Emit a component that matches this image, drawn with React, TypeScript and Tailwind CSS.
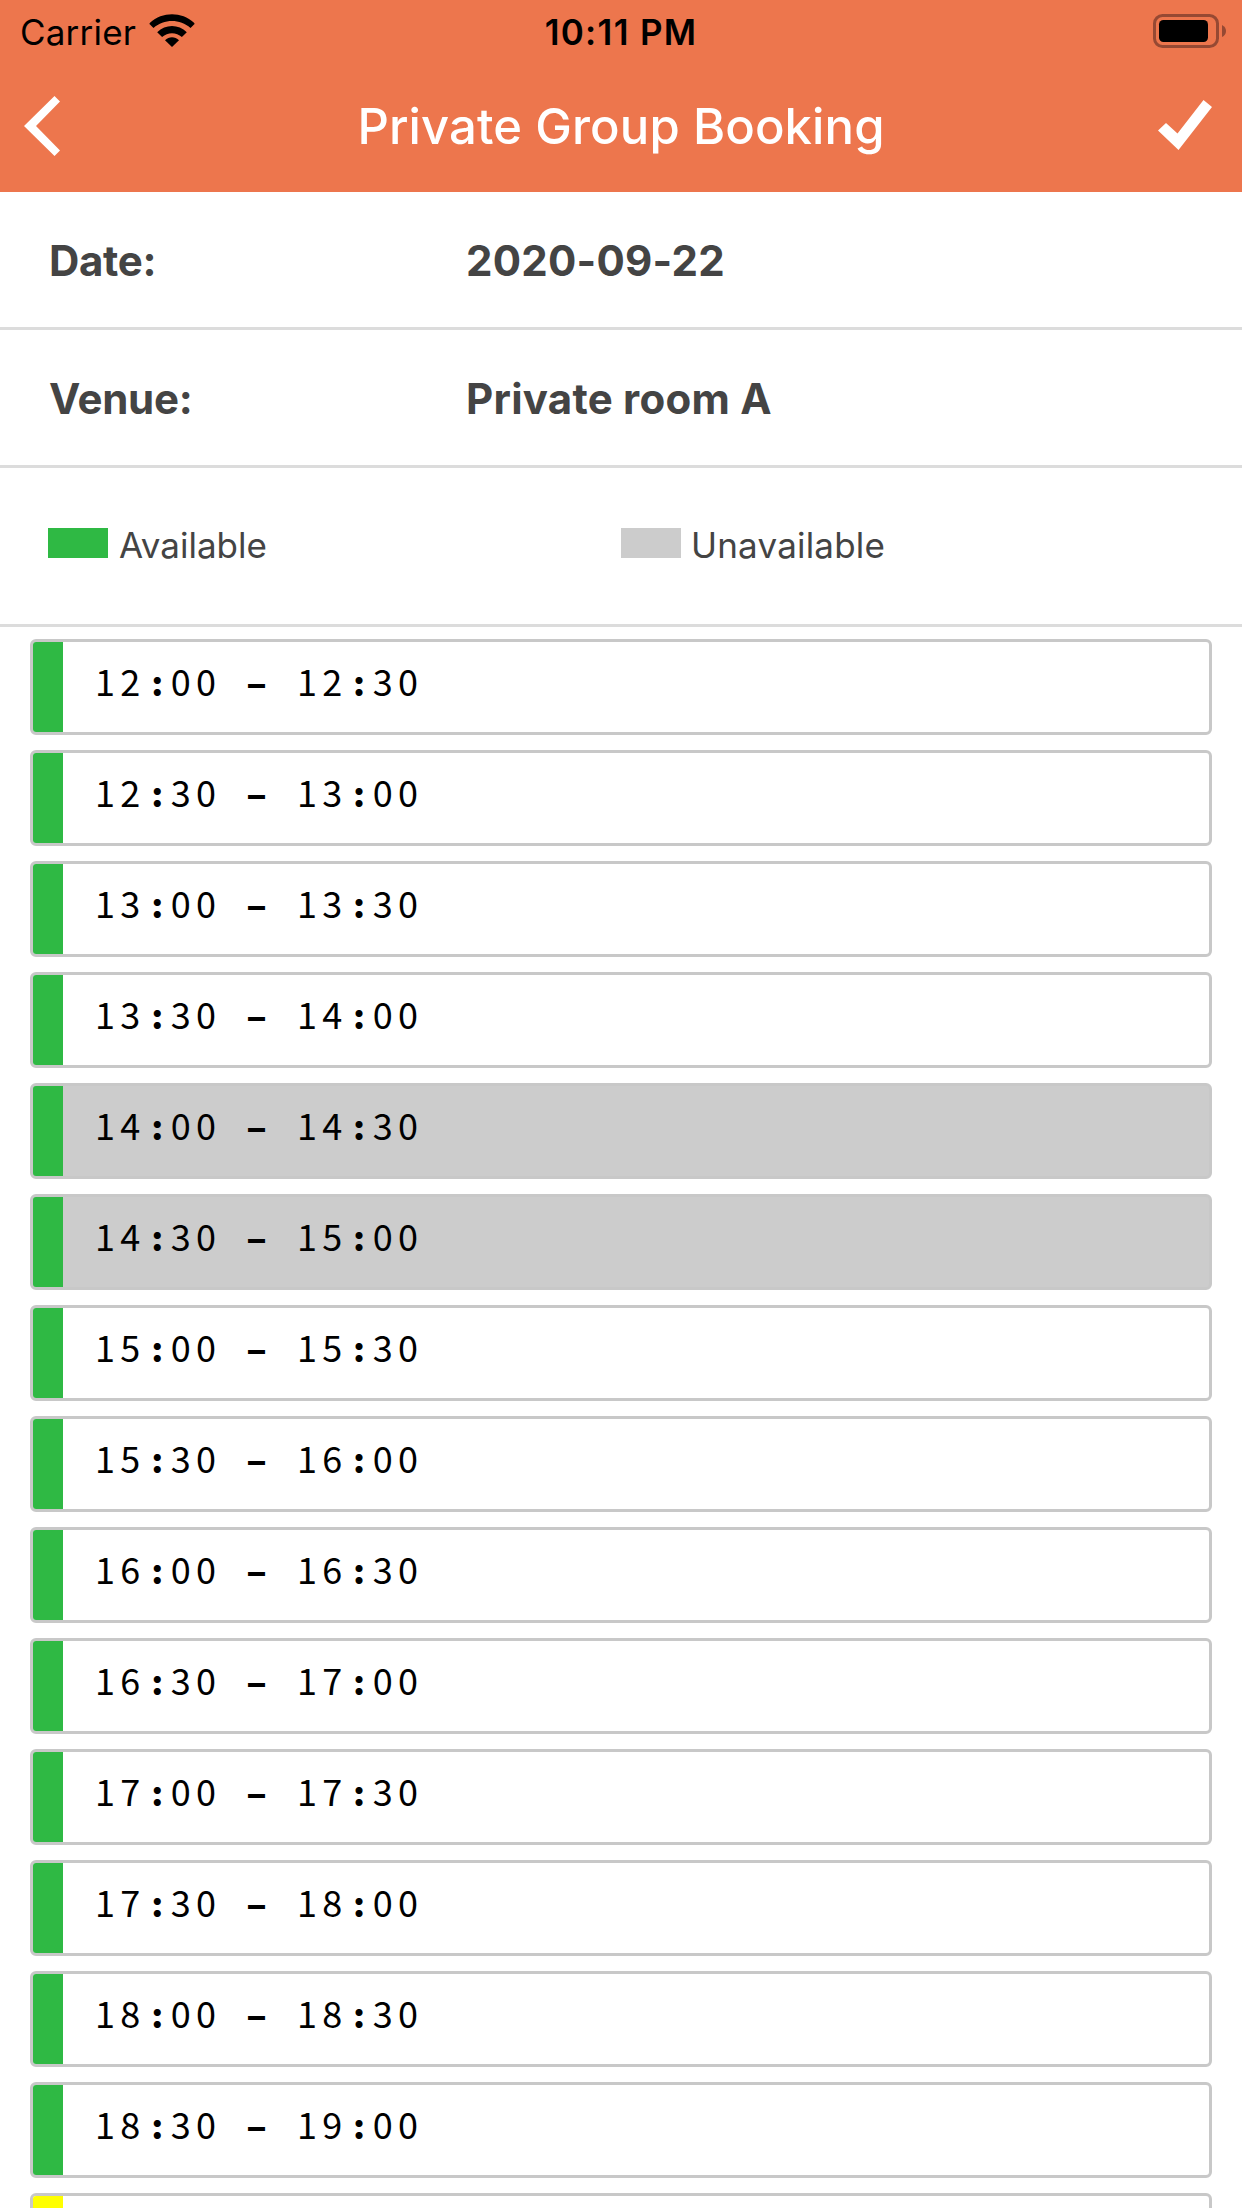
import React from "react";

const slots = [
  { start: "12:00", end: "12:30", selected: false, bar: "bg-[#2fb944]" },
  { start: "12:30", end: "13:00", selected: false, bar: "bg-[#2fb944]" },
  { start: "13:00", end: "13:30", selected: false, bar: "bg-[#2fb944]" },
  { start: "13:30", end: "14:00", selected: false, bar: "bg-[#2fb944]" },
  { start: "14:00", end: "14:30", selected: true, bar: "bg-[#2fb944]" },
  { start: "14:30", end: "15:00", selected: true, bar: "bg-[#2fb944]" },
  { start: "15:00", end: "15:30", selected: false, bar: "bg-[#2fb944]" },
  { start: "15:30", end: "16:00", selected: false, bar: "bg-[#2fb944]" },
  { start: "16:00", end: "16:30", selected: false, bar: "bg-[#2fb944]" },
  { start: "16:30", end: "17:00", selected: false, bar: "bg-[#2fb944]" },
  { start: "17:00", end: "17:30", selected: false, bar: "bg-[#2fb944]" },
  { start: "17:30", end: "18:00", selected: false, bar: "bg-[#2fb944]" },
  { start: "18:00", end: "18:30", selected: false, bar: "bg-[#2fb944]" },
  { start: "18:30", end: "19:00", selected: false, bar: "bg-[#2fb944]" },
  { start: "", end: "", selected: false, bar: "bg-[#ffff00]" },
];

const Time: React.FC<{ value: string }> = ({ value }) => {
  const [hours, minutes] = value.split(":");
  return (
    <span>
      {hours}
      <span className="inline-block w-[25.2px] pr-[2px] text-center font-['Inter',sans-serif] text-[35px] font-black tracking-normal">:</span>
      {minutes}
    </span>
  );
};

const StatusBar: React.FC = () => (
  <div className="grid h-[60px] grid-cols-3 items-center pl-5 text-[35px] leading-[60px] text-black">
    <div className="flex items-center gap-[13px]">
      <span className="pt-[2px] tracking-[0.2px]">Carrier</span>
      <svg className="mb-px h-[33px] w-[46px]" viewBox="0 0 46 33">
        <path d="M1 10.6Q0 9.6 1 8.7C13.5-2.6 32.5-2.6 45 8.7Q46 9.6 45 10.6L41.5 14C31 4.8 15 4.8 4.5 14Z" />
        <path d="M8.2 18.2C16.5 10 29.5 10 37.8 18.2L32.9 23.1C27.3 17.8 18.7 17.8 13.1 23.1Z" />
        <path d="M16 26.2C20 22.3 26 22.3 30 26.2L23 33Z" />
      </svg>
    </div>
    <span className="pt-[2px] pr-5 text-center font-semibold tracking-[1.3px]">10:11 PM</span>
    <div className="flex justify-end pr-4">
      <svg className="h-[34px] w-[73px]" viewBox="0 0 73 34">
        <rect x="1.5" y="1.5" width="63" height="31" rx="8" fill="none" stroke="#964933" strokeWidth="3" />
        <rect x="6" y="6" width="49" height="22" rx="4.5" />
        <path d="M69 11Q73 13 73 17T69 23Z" fill="#964933" />
      </svg>
    </div>
  </div>
);

const TitleBar: React.FC = () => (
  <div className="flex h-[132px] items-center justify-between pr-[30px] pl-6 text-white">
    <svg className="h-[60px] w-[54px]" viewBox="0 0 54 60">
      <path d="M30.5 0 36 5.5 12 30 36 54.5 30.5 60 0 30Z" fill="currentColor" />
    </svg>
    <h1 className="pt-[2px] pl-[6px] text-[49px] font-medium tracking-[0.1px]">Private Group Booking</h1>
    <svg className="mb-[2px] h-[50px] w-[54px]" viewBox="0 0 54 50">
      <path d="M0 30.5 8 23 19.5 33.5 45.5 0 54 7 20.5 50Z" fill="currentColor" />
    </svg>
  </div>
);

const InfoRow: React.FC<{ label: string; value: string }> = ({ label, value }) => (
  <div className="flex h-[138px] items-center border-b-3 border-[#dcdcdc] pt-[2px] pl-[49px] text-[42px] font-bold">
    <span className="w-[417px] tracking-[-0.3px]">{label}</span>
    <span className="tracking-[0.25px]">{value}</span>
  </div>
);

const Legend: React.FC = () => (
  <div className="grid h-[159px] grid-cols-2 items-center border-b-3 border-[#dcdcdc] text-[35px] leading-[60px]">
    <div className="flex items-center gap-[11px] pl-12">
      <span className="mb-[6px] h-[30px] w-[60px] bg-[#2fb944]" />
      <span className="pb-[2px]">Available</span>
    </div>
    <div className="flex items-center gap-[10px]">
      <span className="mb-[6px] h-[30px] w-[60px] bg-[#cccccc]" />
      <span className="pb-[2px] tracking-[0.2px]">Unavailable</span>
    </div>
  </div>
);

const App: React.FC = () => {
  return (
    <div className="h-[2208px] w-[1242px] overflow-hidden bg-white font-['Inter',sans-serif] text-[#444444]">
      <header className="bg-[#ed764d]">
        <StatusBar />
        <TitleBar />
      </header>
      <InfoRow label="Date:" value="2020-09-22" />
      <InfoRow label="Venue:" value="Private room A" />
      <Legend />
      <div className="flex flex-col gap-[15px] px-[30px] pt-3">
        {slots.map((slot) => (
          <div
            key={slot.start}
            className={`flex h-24 shrink-0 overflow-hidden rounded-md border-3 border-[#c8c8c8] ${slot.selected ? "bg-[#cccccc]" : "bg-white"}`}
          >
            <span className={`w-[30px] ${slot.bar}`} />
            {slot.start && (
              <span className="pl-[32px] font-['Noto_Sans_CJK_JP',sans-serif] text-[36px] leading-[77px] tracking-[5.3px] whitespace-pre text-black">
                <Time value={slot.start} />
                <span className="inline-block w-[75.6px] pr-[5px] text-center font-['Inter',sans-serif] text-[34px] font-bold tracking-normal">–</span>
                <Time value={slot.end} />
              </span>
            )}
          </div>
        ))}
      </div>
    </div>
  );
};

export default App;
